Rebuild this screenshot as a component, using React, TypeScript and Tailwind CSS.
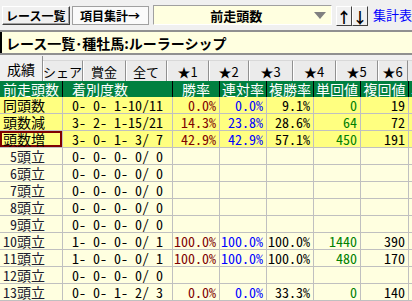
/////////////////////////////// IMPORTS ///////////////////////////////

import React from "react";


/////////////////////////////// DATA ///////////////////////////////

type Row = {
  label: string;
  pad?: boolean;
  link?: boolean;
  hot?: boolean;
  sel?: boolean;
  rec: string;
  win?: string;
  ren?: string;
  fuku?: string;
  tan?: string;
  fk?: string;
};

const rows: Row[] = [
  { label: "同頭数", hot: true, rec: "0- 0- 1-10/11", win: "0.0%", ren: "0.0%", fuku: "9.1%", tan: "0", fk: "19" },
  { label: "頭数減", hot: true, rec: "3- 2- 1-15/21", win: "14.3%", ren: "23.8%", fuku: "28.6%", tan: "64", fk: "72" },
  { label: "頭数増", hot: true, sel: true, rec: "3- 0- 1- 3/ 7", win: "42.9%", ren: "42.9%", fuku: "57.1%", tan: "450", fk: "191" },
  { label: "5頭立", pad: true, link: true, rec: "0- 0- 0- 0/ 0" },
  { label: "6頭立", pad: true, link: true, rec: "0- 0- 0- 0/ 0" },
  { label: "7頭立", pad: true, link: true, rec: "0- 0- 0- 0/ 0" },
  { label: "8頭立", pad: true, link: true, rec: "0- 0- 0- 0/ 0" },
  { label: "9頭立", pad: true, link: true, rec: "0- 0- 0- 0/ 0" },
  { label: "10頭立", link: true, rec: "1- 0- 0- 0/ 1", win: "100.0%", ren: "100.0%", fuku: "100.0%", tan: "1440", fk: "390" },
  { label: "11頭立", link: true, rec: "1- 0- 0- 0/ 1", win: "100.0%", ren: "100.0%", fuku: "100.0%", tan: "480", fk: "170" },
  { label: "12頭立", link: true, rec: "0- 0- 0- 0/ 0" },
  { label: "13頭立", link: true, rec: "0- 0- 1- 2/ 3", win: "0.0%", ren: "0.0%", fuku: "33.3%", tan: "0", fk: "140" },
];

const tabs = [
  { name: "シェア", w: "w-[40px]" },
  { name: "賞金", w: "w-[43px]" },
  { name: "全て", w: "w-[41px]" },
  { name: "★1", w: "w-[42px]" },
  { name: "★2", w: "w-[40px]" },
  { name: "★3", w: "w-[44px]" },
  { name: "★4", w: "w-[43px]" },
  { name: "★5", w: "w-[42px]" },
  { name: "★6", w: "w-[30px]" },
];

const heads = ["勝率", "連対率", "複勝率", "単回値", "複回値"];


/////////////////////////////// PAGE ///////////////////////////////

export default function App() {
  return (
    <div className="w-[412px] h-[301px] overflow-hidden bg-[#f0f0f0] text-black font-['Noto_Sans_CJK_JP',sans-serif]">

      {/* Top bar */}
      <div className="flex h-[30px] items-start pt-[6px] pl-[2px]">
        <div className="flex h-[19px] w-[70px] items-center justify-center border border-t-white border-l-white border-b-[#404040] border-r-[#404040] bg-[#f0f0f0] text-[12px] font-bold leading-none whitespace-nowrap shadow-[inset_-1px_-1px_0_#a0a0a0]">
          レース一覧
        </div>
        <div className="ml-[2px] flex h-[19px] w-[80px] items-center justify-center border border-[#a0a0a0] bg-[#fafafa] text-[12px] font-bold leading-none whitespace-nowrap">
          項目集計→
        </div>
        <div className="relative ml-[4px] flex h-[20px] w-[186px] -mt-[1px] items-center justify-center border border-t-[#a0a0a0] border-l-[#a0a0a0] border-b-white border-r-white bg-[#ffffe0] text-[13px] font-bold leading-none">
          <span className="pr-[12px]">前走頭数</span>
          <svg className="absolute right-[5px] top-[6px]" width="12" height="7" viewBox="0 0 12 7">
            <polygon points="0,0 12,0 6,7" fill="#808080" />
          </svg>
        </div>
        <div className="ml-[4px] flex h-[20px] w-[16px] items-center justify-center border border-t-white border-l-white border-b-[#404040] border-r-[#404040] text-[15px] font-bold leading-none">
          ↑
        </div>
        <div className="flex h-[20px] w-[16px] items-center justify-center border border-t-white border-l-white border-b-[#404040] border-r-[#404040] text-[15px] font-bold leading-none">
          ↓
        </div>
        <div className="ml-[5px] mt-[2px] whitespace-nowrap text-[13px] leading-none text-[#0000ff]">
          集計表
        </div>
      </div>

      {/* Title */}
      <div className="h-[25px] border-t-2 border-b-2 border-t-[#909090] border-b-[#909090] bg-[#ffffe0]">
        <div className="flex h-full items-center border-l-2 border-black pl-[4px] text-[14px] font-bold leading-none whitespace-nowrap">
          レース一覧･種牡馬:ルーラーシップ
        </div>
      </div>

      {/* Tabs */}
      <div className="flex h-[26px] items-end">
        <div className="flex h-[25px] w-[43px] items-center justify-center border-r border-[#909090] bg-[#f0f0f0] text-[14px] leading-none">
          成績
        </div>
        {tabs.map(t => (
          <div
            key={t.name}
            className={`${t.w} flex h-[21px] items-center justify-center border-t border-r border-t-[#d8d8d8] border-r-[#909090] bg-[#ebebeb] text-[13px] leading-none shadow-[inset_1px_0_0_#ffffff]`}
          >
            {t.name}
          </div>
        ))}
        <div className="h-[21px] flex-1 border-t border-[#d8d8d8] bg-[#ebebeb]" />
      </div>

      {/* Table */}
      <div className="grid grid-cols-[63px_110px_47px_47px_47px_47px_48px_1fr] font-['Noto_Sans_Mono_CJK_JP','Noto_Sans_CJK_JP',monospace] [font-feature-settings:'hwid'] text-[14px] leading-[16px]">

        {/* header */}
        <div className="h-[16px] border-r border-black bg-[#008040] pl-[3px] text-white whitespace-nowrap">前走頭数</div>
        <div className="h-[16px] border-r border-black bg-[#008040] pl-[9px] text-white">着別度数</div>
        {heads.map(h => (
          <div key={h} className="h-[16px] border-r border-black bg-[#008040] text-center text-white">{h}</div>
        ))}
        <div className="h-[16px] bg-[#008040] pl-[2px] text-white whitespace-nowrap overflow-hidden">単</div>

        {/* rows */}
        {rows.map(r => {
          const bg = r.hot ? "bg-[#ffff80]" : "bg-[#ffffe0]";
          const cell = `h-[17px] border-r border-b border-[#c0c0c0] ${bg} whitespace-pre overflow-hidden`;
          return (
            <React.Fragment key={r.label}>
              <div className={`${cell} ${r.sel ? "shadow-[inset_0_0_0_2px_#800000]" : ""} pl-[3px]`}>
                {r.pad && <span className="inline-block w-[7px]" />}
                <span className={r.link ? "underline decoration-1 underline-offset-2 text-[#202030]" : ""}>{r.label}</span>
              </div>
              <div className={`${cell} text-center`}>{r.rec}</div>
              <div className={`${cell} pr-[3px] text-right text-[#800000]`}>{r.win ?? ""}</div>
              <div className={`${cell} pr-[3px] text-right text-[#0000ff]`}>{r.ren ?? ""}</div>
              <div className={`${cell} pr-[3px] text-right`}>{r.fuku ?? ""}</div>
              <div className={`${cell} pr-[3px] text-right text-[#008000]`}>{r.tan ?? ""}</div>
              <div className={`${cell} pr-[3px] text-right`}>{r.fk ?? ""}</div>
              <div className={`${cell} border-r-0`} />
            </React.Fragment>
          );
        })}
      </div>
    </div>
  );
}
